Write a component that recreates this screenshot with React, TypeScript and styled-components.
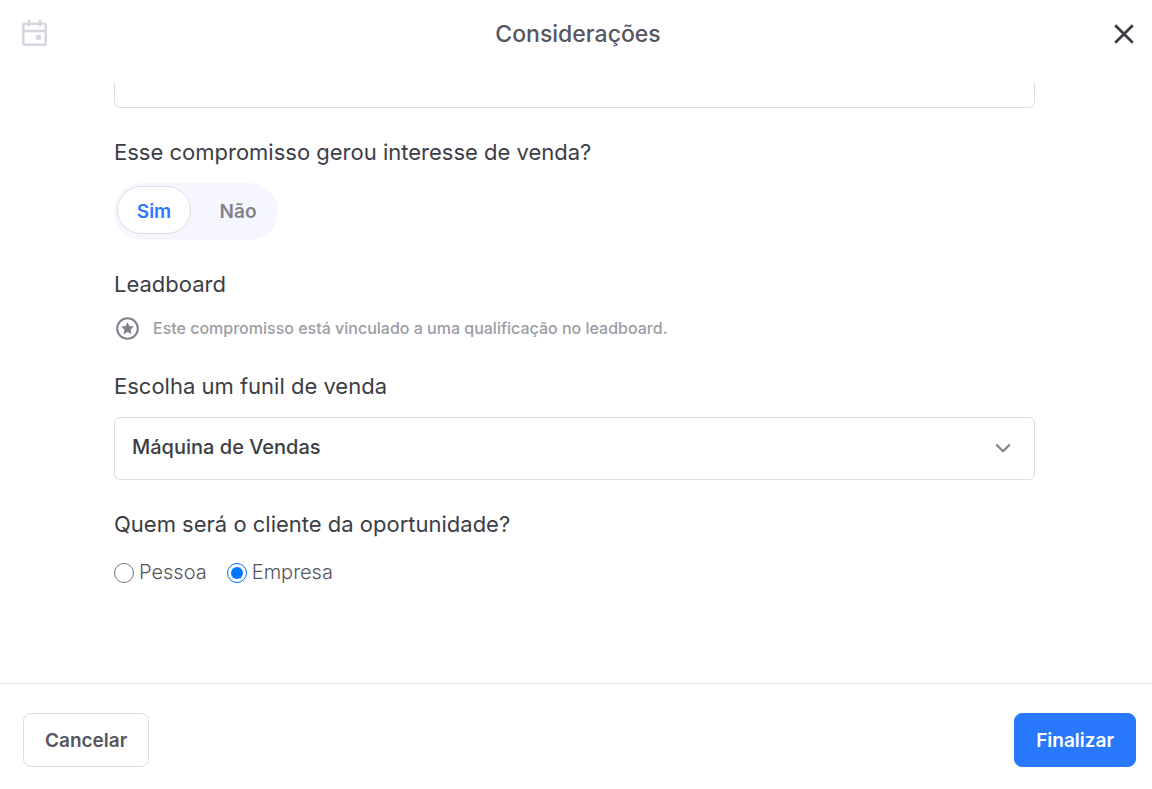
import React, { useState } from "react";
import styled, { createGlobalStyle } from "styled-components";

const GlobalStyle = createGlobalStyle`
  *, *::before, *::after { box-sizing: border-box; }
  body {
    margin: 0;
    background: #fff;
    color: #3c3d45;
    font-family: Inter, "Liberation Sans", sans-serif;
  }
  button, input, select, textarea { font: inherit; color: inherit; }
`;

const Dialog = styled.div`
  display: flex;
  flex-direction: column;
  min-height: 100vh;
`;

const Header = styled.header`
  display: grid;
  grid-template-columns: 1fr auto 1fr;
  align-items: center;
  height: 68px;
  margin-bottom: 15px;
  padding: 0 16px 0 20px;
`;

const Title = styled.h1`
  margin: 0;
  color: #55565f;
  font-size: 23px;
  font-weight: 500;
  line-height: 32px;
`;

const CloseButton = styled.button`
  display: flex;
  justify-self: end;
  padding: 0;
  border: 0;
  background: none;
  color: #3c3d45;
  cursor: pointer;
`;

const Body = styled.main`
  display: flex;
  flex: 1;
  flex-direction: column;
  gap: 28px;
  padding: 0 117px 32px 114px;
`;

const Notes = styled.textarea`
  display: block;
  width: 100%;
  height: 25px;
  padding: 0 16px;
  border: 1px solid #dddde6;
  border-top: 0;
  border-radius: 0 0 6px 6px;
  background: #fff;
  outline: none;
  resize: none;
`;

const Section = styled.section`
  display: flex;
  flex-direction: column;
  align-items: flex-start;
  gap: 15px;
`;

const Question = styled.h2`
  margin: 0;
  font-size: 22px;
  font-weight: 400;
  line-height: 32px;
`;

const Toggle = styled.div`
  display: flex;
  gap: 10px;
  height: 57px;
  padding: 3px;
  border-radius: 29px;
  background: #f6f6ff;
`;

const ToggleOption = styled.button<{ $active: boolean }>`
  min-width: 74px;
  height: 48px;
  padding: 2px 16px 0;
  border: 1px solid ${(p) => (p.$active ? "#dddde6" : "transparent")};
  border-radius: 24px;
  background: ${(p) => (p.$active ? "#fff" : "transparent")};
  color: ${(p) => (p.$active ? "#2979ff" : "#82828c")};
  font-size: 19px;
  font-weight: 600;
  cursor: pointer;
`;

const Hint = styled.p`
  display: flex;
  align-items: center;
  gap: 12px;
  margin: 0;
  color: #9c9ca5;
  font-size: 16px;
  font-weight: 500;
  line-height: 27px;
`;

const SelectBox = styled.div`
  display: grid;
  align-items: center;
  width: 100%;
  > * { grid-area: 1 / 1; }
  > svg { justify-self: end; margin: 0 20px 2px 0; pointer-events: none; }
`;

const Select = styled.select`
  width: 100%;
  height: 63px;
  padding: 0 56px 3px 17px;
  border: 1px solid #dddde6;
  border-radius: 6px;
  background: #fff;
  font-size: 20px;
  font-weight: 500;
  appearance: none;
`;

const Choices = styled.div`
  display: flex;
  gap: 20px;
`;

const Choice = styled.label`
  display: flex;
  align-items: center;
  gap: 5px;
  color: #55565f;
  font-size: 20px;
  font-weight: 300;
  line-height: 34px;
`;

const Radio = styled.input`
  width: 20px;
  height: 20px;
  margin: 2px 0 0;
  accent-color: #0075ff;
`;

const Footer = styled.footer`
  display: flex;
  align-items: flex-start;
  justify-content: space-between;
  height: 106px;
  padding: 29px 16px 22px 23px;
  border-top: 1px solid #e7e7ec;
`;

const ActionButton = styled.button<{ $primary?: boolean }>`
  height: 54px;
  padding: 0 21px;
  border: 1px solid ${(p) => (p.$primary ? "#2979ff" : "#dddde6")};
  border-radius: 8px;
  background: ${(p) => (p.$primary ? "#2979ff" : "#fff")};
  color: ${(p) => (p.$primary ? "#fff" : "#55565f")};
  font-size: 19px;
  font-weight: 600;
  cursor: pointer;
`;

const CalendarIcon = () => (
  <svg width="29" height="30" viewBox="0 0 29 30" fill="none" stroke="#d6d6e0" strokeWidth="2.6" aria-hidden="true">
    <rect x="3.3" y="4.800" width="22.4" height="21" rx="1.600" />
    <path d="M3 12h23" />
    <path d="M9 1.800v4.600M20 1.800v4.600" strokeLinecap="round" />
    <circle cx="18.500" cy="18.500" r="2.800" fill="#d6d6e0" stroke="none" />
  </svg>
);

const CloseIcon = () => (
  <svg width="24" height="24" viewBox="0 0 24 24" stroke="currentColor" strokeWidth="2.800" aria-hidden="true">
    <path d="M3.200 3.200l17.600 17.600M20.800 3.200L3.200 20.800" />
  </svg>
);

const StarIcon = () => (
  <svg width="27" height="27" viewBox="0 0 27 27" fill="none" aria-hidden="true">
    <circle cx="13.500" cy="13.500" r="10.300" stroke="#82828c" strokeWidth="2.100" />
    <path d="M13.500 7l1.900 4.100 4.500.5-3.300 3.100.9 4.500-4-2.200-4 2.200.9-4.500-3.300-3.100 4.500-.5z" fill="#82828c" />
  </svg>
);

const ChevronIcon = () => (
  <svg width="24" height="24" viewBox="0 0 24 24" fill="none" stroke="#82828c" strokeWidth="2.200" aria-hidden="true">
    <path d="M5.200 8.500l6.800 6.800 6.800-6.800" />
  </svg>
);

export default function App() {
  const [interested, setInterested] = useState(true);
  const [client, setClient] = useState("empresa");

  return (
    <>
      <GlobalStyle />
      <Dialog>
        <Header>
          <CalendarIcon />
          <Title>Considerações</Title>
          <CloseButton type="button" aria-label="Fechar">
            <CloseIcon />
          </CloseButton>
        </Header>

        <Body>
          <Notes aria-label="Considerações" />

          <Section>
            <Question>Esse compromisso gerou interesse de venda?</Question>
            <Toggle>
              <ToggleOption type="button" $active={interested} aria-pressed={interested} onClick={() => setInterested(true)}>
                Sim
              </ToggleOption>
              <ToggleOption type="button" $active={!interested} aria-pressed={!interested} onClick={() => setInterested(false)}>
                Não
              </ToggleOption>
            </Toggle>
          </Section>

          <Section>
            <Question>Leadboard</Question>
            <Hint>
              <StarIcon />
              Este compromisso está vinculado a uma qualificação no leadboard.
            </Hint>
          </Section>

          <Section>
            <Question as="label" htmlFor="funnel">Escolha um funil de venda</Question>
            <SelectBox>
              <Select id="funnel" defaultValue="maquina">
                <option value="maquina">Máquina de Vendas</option>
              </Select>
              <ChevronIcon />
            </SelectBox>
          </Section>

          <Section>
            <Question id="client-question">Quem será o cliente da oportunidade?</Question>
            <Choices role="radiogroup" aria-labelledby="client-question">
              <Choice>
                <Radio type="radio" name="client" checked={client === "pessoa"} onChange={() => setClient("pessoa")} />
                Pessoa
              </Choice>
              <Choice>
                <Radio type="radio" name="client" checked={client === "empresa"} onChange={() => setClient("empresa")} />
                Empresa
              </Choice>
            </Choices>
          </Section>
        </Body>

        <Footer>
          <ActionButton type="button">Cancelar</ActionButton>
          <ActionButton type="button" $primary>Finalizar</ActionButton>
        </Footer>
      </Dialog>
    </>
  );
}
